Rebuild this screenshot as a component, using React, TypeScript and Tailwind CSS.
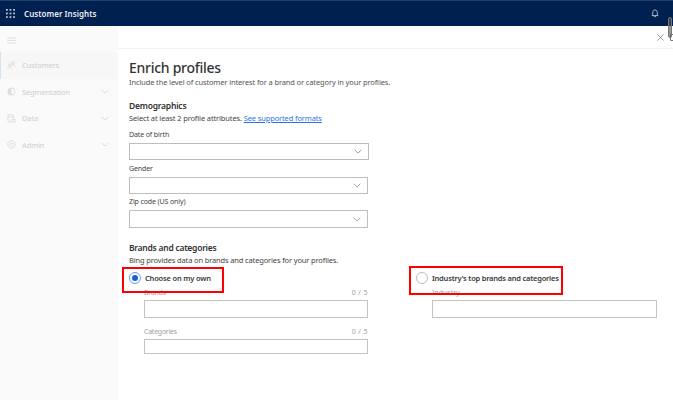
import React from "react";

function Chevron({ className = "" }: { className?: string }) {
  return (
    <svg className={className} width="8" height="5" viewBox="0 0 8 5" fill="none" stroke="currentColor" strokeWidth="0.8">
      <path d="M0.6 0.7 L4 4.1 L7.4 0.7" />
    </svg>
  );
}

function Waffle() {
  return (
    <svg width="9" height="9" viewBox="0 0 9 9" fill="#c9d1de">
      {[0, 3.6, 7.2].map((y) => [0, 3.6, 7.2].map((x) => <rect key={`${x}-${y}`} x={x} y={y} width="1.7" height="1.7" />))}
    </svg>
  );
}

const navIcons: Record<string, React.ReactNode> = {
  Customers: (
    <>
      <circle cx="6" cy="2" r="1.4" />
      <circle cx="2.8" cy="4" r="1.2" />
      <path d="M0.7 8 C0.9 5 4.5 5 4.7 8 M4.4 4.6 C5.4 3.1 7.8 3.4 8 5.8" />
    </>
  ),
  Segmentation: (
    <>
      <circle cx="4.5" cy="4.5" r="3.6" />
      <path d="M4.5 0.9 A3.6 3.6 0 0 0 4.5 8.1 Z" fill="currentColor" stroke="none" fillOpacity="0.7" />
    </>
  ),
  Data: (
    <>
      <ellipse cx="3.8" cy="1.8" rx="2.8" ry="1.2" />
      <path d="M1 1.8 V7 C1 7.6 2 8 3.8 8 M6.6 1.8 V4.4" />
      <rect x="4.8" y="5.2" width="3.2" height="2.8" />
    </>
  ),
  Admin: (
    <>
      <circle cx="4.5" cy="4.5" r="1.6" />
      <path d="M3.3 0.7 H5.7 L8.3 3.3 V5.7 L5.7 8.3 H3.3 L0.7 5.7 V3.3 Z" />
    </>
  ),
};

function NavItem({ label, active = false }: { label: string; active?: boolean }) {
  return (
    <div
      className={`flex h-[26.5px] items-center pr-[9px] ${
        active ? "border-l border-[#d5e2ef] bg-[#f7f7f7] pl-[6px]" : "pl-[7px]"
      }`}
    >
      <svg className="mr-[6px] shrink-0 text-[#d4d4d4]" width="9" height="9" viewBox="0 0 9 9" fill="none" stroke="currentColor" strokeWidth="0.75">
        {navIcons[label]}
      </svg>
      <span className="flex-1 pt-px text-[7.5px] tracking-[-0.13px] text-[#cecece]">{label}</span>
      {!active && <Chevron className="text-[#d0d0d0]" />}
    </div>
  );
}

function SelectField({ label, box }: { label: string; box: string }) {
  return (
    <>
      <div className="h-[13px] text-[7px] leading-[10px] tracking-[-0.12px] text-[#444]">{label}</div>
      <div className={`flex items-center justify-end border border-[#bebebe] pr-[6px] ${box}`}>
        <Chevron className="text-[#8c8c8c]" />
      </div>
    </>
  );
}

function Radio({ checked = false }: { checked?: boolean }) {
  return (
    <span
      className={`-mt-[0.5px] flex size-[12px] shrink-0 items-center justify-center rounded-full border bg-white ${
        checked ? "border-[#6a98f0]" : "border-[#bdbdbd]"
      }`}
    >
      {checked && <span className="size-[6px] rounded-full bg-[#1c5be0]" />}
    </span>
  );
}

function CountedField({ label, box }: { label: string; box: string }) {
  return (
    <>
      <div className="flex h-[12px] justify-between">
        <span className="tracking-[-0.25px]">{label}</span>
        <span className="tracking-[0.4px]">0 / 5</span>
      </div>
      <div className={`border border-[#c4c4c4] ${box}`} />
    </>
  );
}

export default function App() {
  return (
    <div className="relative flex h-[400px] w-[673px] flex-col overflow-hidden bg-white font-['Noto_Sans','Open_Sans',sans-serif] text-[#333]">
      <header className="flex h-[26px] shrink-0 items-center border-t border-[#23406a] bg-[#002050] pr-[14px] pl-[6px]">
        <Waffle />
        <span className="ml-[9px] flex-1 text-[8px] font-semibold tracking-[0.04px] text-[#e8ecf2]">Customer Insights</span>
        <svg width="8" height="9" viewBox="0 0 8 9" fill="none" stroke="#d5dce7" strokeWidth="0.8">
          <path d="M1 6.6 H7 L6.3 5.5 V3.5 C6.3 0.2 1.7 0.2 1.7 3.5 V5.5 Z M3.1 7.6 H4.9" />
        </svg>
      </header>

      <div className="flex flex-1">
        <aside className="w-[118px] shrink-0 bg-[#fafafa]">
          <div className="flex h-[26px] items-center pt-[2px] pl-[7px]">
            <svg width="9" height="7" viewBox="0 0 9 7" stroke="#dedede" strokeWidth="0.9">
              <path d="M0 1 H9 M0 3.5 H9 M0 6 H9" />
            </svg>
          </div>
          <NavItem label="Customers" active />
          <NavItem label="Segmentation" />
          <NavItem label="Data" />
          <NavItem label="Admin" />
        </aside>

        <main className="flex-1">
          <div className="flex h-[23px] items-center justify-end border-b border-[#f1f1f1] pr-[9px]">
            <svg width="7" height="7" viewBox="0 0 7 7" fill="none" stroke="#808080" strokeWidth="0.8">
              <path d="M0.5 0.5 L6.5 6.5 M6.5 0.5 L0.5 6.5" />
            </svg>
          </div>

          <div className="pt-[8px] pl-[11px] whitespace-nowrap">
            <h1 className="h-[20px] text-[14px] leading-[21px] font-medium tracking-[-0.27px] text-[#333]">Enrich profiles</h1>
            <p className="h-[22px] text-[7.5px] leading-[11px] tracking-[-0.13px] text-[#555]">
              Include the level of customer interest for a brand or category in your profiles.
            </p>
            <h2 className="h-[14px] text-[8.5px] leading-[13px] font-semibold tracking-[-0.22px]">Demographics</h2>
            <p className="h-[17px] text-[7.5px] leading-[11px] tracking-[-0.13px] text-[#444]">
              Select at least 2 profile attributes.{" "}
              <a className="text-[#2b73ea] underline decoration-[0.5px] underline-offset-1">See supported formats</a>
            </p>
            <SelectField label="Date of birth" box="mb-[4px] h-[17px] w-[240px]" />
            <SelectField label="Gender" box="mb-[3px] h-[17px] w-[239px]" />
            <SelectField label="Zip code (US only)" box="h-[18px] w-[239px]" />

            <h2 className="mt-[13px] h-[14px] text-[8.5px] leading-[13px] font-semibold tracking-[-0.25px]">Brands and categories</h2>
            <p className="h-[17px] text-[7.5px] leading-[11px] tracking-[-0.145px] text-[#444]">
              Bing provides data on brands and categories for your profiles.
            </p>

            <div className="flex">
              <section className="w-[287px]">
                <div className="flex h-[16px] items-start">
                  <Radio checked />
                  <span className="ml-[4px] text-[7.5px] leading-[13px] font-semibold tracking-[-0.2px] text-[#3a3a3a]">Choose on my own</span>
                </div>
                <div className="ml-[15px] w-[224px] text-[7px] leading-[10px] text-[#a0a0a0]">
                  <CountedField label="Brands" box="mb-[9px] h-[18px]" />
                  <CountedField label="Categories" box="h-[15px]" />
                </div>
              </section>
              <section>
                <div className="flex h-[16px] items-start">
                  <Radio />
                  <span className="ml-[4px] text-[7.5px] leading-[13px] font-semibold tracking-[-0.22px] text-[#3a3a3a]">Industry's top brands and categories</span>
                </div>
                <div className="ml-[16px] w-[225px] text-[7px] leading-[10px] text-[#a0a0a0]">
                  <div className="h-[12px]">Industry</div>
                  <div className="h-[18px] border border-[#c4c4c4]" />
                </div>
              </section>
            </div>
          </div>
        </main>
      </div>

      <div className="absolute top-[267px] left-[122px] h-[26px] w-[102px] border-2 border-[#f00]" />
      <div className="absolute top-[266px] left-[409px] h-[29px] w-[154px] border-2 border-[#f00]" />
      <div className="absolute top-[34px] left-[670px] h-[7px] w-[5px] rounded-[1px] border border-[#777]" />
      <div className="absolute top-[17px] left-[668px] h-[21px] w-[4px] rounded-full border border-[#777] bg-[#5559]" />
    </div>
  );
}
